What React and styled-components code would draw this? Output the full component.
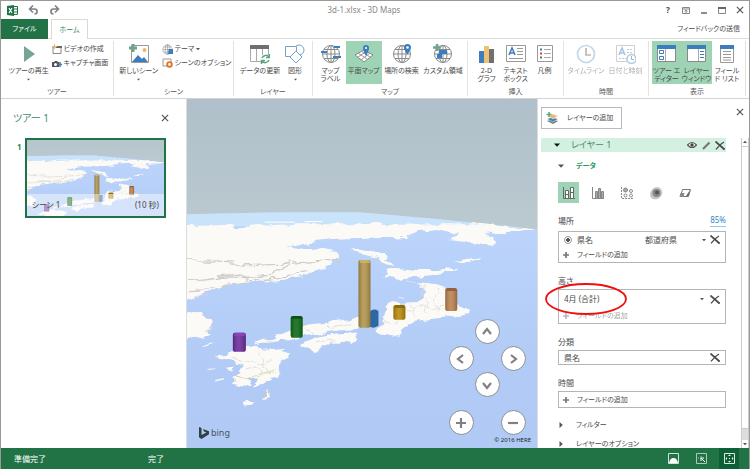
import React, { useState } from 'react';
import styled, { createGlobalStyle } from 'styled-components';

const GlobalStyle = createGlobalStyle`
  * { box-sizing: border-box; }
  body {
    margin: 0;
    color: #484848;
    background: #fff;
    font-family: "Noto Sans", "Noto Sans CJK JP", sans-serif;
    font-size: 8px;
    line-height: 8px;
    font-feature-settings: "palt";
  }
  button, select, input { font: inherit; font-feature-settings: inherit; color: inherit; margin: 0; padding: 0; }
  button, select { border: 0; background: none; }
  a { color: inherit; text-decoration: none; }
  svg { display: block; flex: none; }
`

const Window = styled.div`
  display: flex;
  flex-direction: column;
  height: 100vh;
  border: 1px solid #999;
  border-bottom: 0;
  overflow: hidden;
`

const TitleBar = styled.header`
  display: grid;
  grid-template-columns: 1fr auto 1fr;
  align-items: center;
  height: 18px;
  padding: 0 4px 0 6px;
`

const Quick = styled.div`
  display: flex;
  gap: 10px;
`

const Title = styled.h1`
  margin: 0;
  padding-right: 24px;
  font-size: 8px;
  font-weight: 400;
  color: #888;
`

const Controls = styled.div`
  display: flex;
  justify-content: flex-end;
  gap: 8px;
`

const PlainButton = styled.button`
  display: flex;
  align-items: center;
  justify-content: center;
  min-width: 10px;
  height: 10px;
`

const TabBar = styled.nav`
  display: flex;
  align-items: flex-end;
  height: 20px;
  border-bottom: 1px solid #dcdcdc;
  font-size: 7px;
`

const FileTab = styled.button`
  width: 47px;
  height: 20px;
  margin-bottom: -1px;
  background: #217346;
  color: #fff;
`

const Tab = styled.button`
  width: 37px;
  height: 20px;
  margin: 0 auto -1px 3px;
  border: 1px solid #dcd9d0;
  border-bottom: 0;
  background: #fff;
  color: #2f8a5b;
`

const Feedback = styled.a`
  padding: 0 9px 5px 0;
`

const Ribbon = styled.div`
  display: grid;
  grid-template-columns: 113fr 120fr 79fr 155fr 96fr 85fr 97fr 3fr;
  padding-top: 2px;
  border-bottom: 1px solid #d0d4d6;
  font-size: 7px;
`

const GroupBox = styled.section`
  display: flex;
  flex-direction: column;
  min-width: 0;
  margin-bottom: 2px;
  border-right: 1px solid #e4e3dd;
`

const Tools = styled.div`
  display: flex;
  justify-content: center;
  height: 43px;
`

const GroupName = styled.h2`
  margin: 3px 0 0;
  font-size: 7px;
  font-weight: 400;
  line-height: 9px;
  text-align: center;
  color: #555;
`

const ToolButton = styled.button`
  display: flex;
  flex-direction: column;
  align-items: center;
  gap: 3px;
  width: ${p => p.$w}px;
  padding: 3px 0 1px;
  white-space: nowrap;
  background: ${p => p.$on ? '#9ed4b5' : 'none'};
  opacity: ${p => p.disabled ? 0.45 : 1};
`

const ToolLabel = styled.span`
  display: flex;
  flex-direction: column;
  align-items: center;
  height: 16px;
  gap: 3px;
  white-space: pre-line;
`

const SmallTools = styled.div`
  display: flex;
  flex-direction: column;
  padding-top: 1px;
`

const SmallTool = styled.button`
  display: flex;
  align-items: center;
  gap: 2px;
  height: 14px;
  white-space: nowrap;
`

const Body = styled.main`
  display: flex;
  flex: 1;
  min-height: 0;
`

const TourPane = styled.aside`
  width: 186px;
  padding: 12px 16px 0 12px;
  border-right: 1px solid #ddd;
`

const PaneHead = styled.div`
  display: flex;
  align-items: center;
  justify-content: space-between;
`

const PaneTitle = styled.h2`
  margin: 0;
  font-size: 10px;
  line-height: 14px;
  font-weight: 400;
  color: #48896a;
`

const SceneRow = styled.div`
  display: flex;
  gap: 3px;
  margin: 13px 4px 0;
`

const SceneNumber = styled.span`
  padding-top: 4px;
  font-size: 8px;
  line-height: 10px;
  font-weight: 700;
  color: #2f8a5b;
`

const Thumb = styled.button`
  position: relative;
  flex: 1;
  height: 80px;
  border: 2px solid #217346;
  overflow: hidden;
`

const ThumbCaption = styled.span`
  position: absolute;
  inset: auto 0 0;
  display: flex;
  justify-content: space-between;
  padding: 6px 5px;
  line-height: 10px;
  background: rgba(255, 255, 255, 0.45);
`

const MapArea = styled.section`
  position: relative;
  flex: 1;
  min-width: 0;
  overflow: hidden;
  background: #adc8f2;
`

const MapSvg = styled.svg`
  width: 100%;
  height: 100%;
`

const NavPad = styled.div`
  position: absolute;
  right: 11px;
  bottom: 13px;
  display: grid;
  grid-template-columns: repeat(3, 26px);
  grid-template-rows: 27px 26px 38px 25px;
  grid-template-areas: ". up ." "left . right" ". down ." "plus . minus";
  justify-items: center;
`

const NavButton = styled.button`
  grid-area: ${p => p.$area};
  display: flex;
  align-items: center;
  justify-content: center;
  width: 25px;
  height: 25px;
  border: 1px solid #8b8f94;
  border-radius: 50%;
  background: #fff;
`

const Bing = styled.span`
  position: absolute;
  left: 12px;
  bottom: 9px;
  display: flex;
  align-items: center;
  gap: 2px;
  font-size: 9px;
  line-height: 12px;
  color: #4a5566;
`

const Copyright = styled.span`
  position: absolute;
  right: 6px;
  bottom: 4px;
  font-size: 6px;
  color: #222;
`

const LayerPane = styled.aside`
  display: flex;
  flex-direction: column;
  width: 212px;
  border-left: 1px solid #ddd;
`

const LayerHead = styled.div`
  display: flex;
  justify-content: space-between;
  padding: 8px 4px 9px 3px;
`

const AddLayer = styled.button`
  display: flex;
  align-items: center;
  gap: 8px;
  width: 81px;
  height: 22px;
  padding-left: 4px;
  border: 1px solid #bbb;
  font-size: 7px;
`

const LayerScroll = styled.div`
  display: flex;
  flex: 1;
  min-height: 0;
`

const Layers = styled.div`
  flex: 1;
  min-width: 0;
  overflow: hidden;
  padding: 0 15px 0 3px;
`

const LayerBar = styled.div`
  display: flex;
  align-items: center;
  gap: 4px;
  height: 14px;
  padding: 0 1px 0 13px;
  background: #d3f0e0;
`

const LayerName = styled.h3`
  flex: 1;
  margin: 0 0 0 7px;
  font-size: 9px;
  font-weight: 400;
  color: #48896a;
`

const LayerContent = styled.div`
  padding-left: 17px;
`

const Fold = styled.button`
  display: flex;
  align-items: center;
  gap: 12px;
  height: 14px;
  margin-top: ${p => p.$top}px;
  font-size: 7px;
  font-weight: ${p => p.$open ? 700 : 400};
  color: ${p => p.$open ? '#1f9a5b' : '#484848'};
`

const Visuals = styled.div`
  display: flex;
  gap: 8px;
  margin-top: 9px;
`

const Visual = styled.button`
  display: flex;
  align-items: center;
  justify-content: center;
  width: 21px;
  height: 21px;
  background: ${p => p.$on ? '#9ed4b5' : 'none'};
`

const FieldHead = styled.div`
  display: flex;
  justify-content: space-between;
  line-height: 12px;
  margin: 12px 0 ${p => p.$gap || 2}px;
`

const Percent = styled.a`
  color: #3484c4;
  border-bottom: 1px solid #9cc4e4;
  line-height: 9px;
`

const FieldBox = styled.div`
  position: relative;
  display: flex;
  flex-direction: column;
  border: 1px solid #b5b5b5;
`

const FieldRow = styled.div`
  display: flex;
  align-items: center;
  height: ${p => p.$h}px;
  padding: 0 5px;
`

const RadioLabel = styled.label`
  display: flex;
  align-items: center;
  gap: 5px;
  width: 81px;
`

const Radio = styled.input`
  appearance: none;
  width: 8px;
  height: 8px;
  border: 1px solid #999;
  border-radius: 50%;
  background: radial-gradient(#555 0 2px, #fff 2px);
`

const Select = styled.select`
  flex: 1;
  appearance: none;
  height: 12px;
`

const AddField = styled.button`
  display: flex;
  align-items: center;
  gap: 8px;
  height: ${p => p.$h}px;
  padding: 0 4px;
  font-size: 7px;
  opacity: ${p => p.disabled ? 0.5 : 1};
`

const FieldName = styled.button`
  flex: 1;
  text-align: left;
`

const Gap = styled.span`
  width: ${p => p.$w}px;
`

const Ring = styled.svg`
  position: absolute;
  left: -15px;
  top: -8px;
  pointer-events: none;
`

const ScrollBar = styled.div`
  display: flex;
  flex-direction: column;
  width: 8px;
  border: 1px solid #ccc;
  border-width: 0 1px;
  background: #ddd;
`

const ScrollArrow = styled.button`
  display: flex;
  align-items: center;
  justify-content: center;
  height: 8px;
  background: #fff;
`

const ScrollThumb = styled.div`
  flex: 1;
  margin-bottom: 11px;
  border: 1px solid #ccc;
  border-width: 1px 0;
  background: #fff;
`

const StatusBar = styled.footer`
  display: flex;
  align-items: center;
  height: 21px;
  padding: 0 10px 0 13px;
  background: #217346;
  color: #fff;
`

const StatusText = styled.span`
  width: ${p => p.$w}px;
  margin-right: ${p => p.$last ? 'auto' : 0};
`

const StatusButton = styled.button`
  display: flex;
  align-items: center;
  justify-content: center;
  width: 20px;
  height: 21px;
  margin-left: 8px;
  background: ${p => p.$on ? '#0d5f36' : 'none'};
`

const Caret = ({ size = 4, dir = 'down', color = '#555' }) => {
  const turn = { down: 0, right: -90, up: 180 }[dir]
  return (
    <svg width={size} height={size} viewBox="0 0 4 4">
      <path d="M0 1h4L2 3.2z" fill={color} transform={`rotate(${turn} 2 2)`} />
    </svg>
  )
}

const Cross = ({ size = 9, w = 1.3, color = '#555' }) => (
  <svg width={size} height={size} viewBox="0 0 9 9">
    <path d="M1 1l7 7M8 1L1 8" stroke={color} strokeWidth={w} />
  </svg>
)

const DeleteMark = () => (
  <svg width="10" height="9" viewBox="0 0 10 9">
    <path d="M.5 .5l8.500 7.500" stroke="#4a4a4a" strokeWidth="1.700" fill="none" />
    <path d="M9 1Q5 3 1 8.300M8 8h2" stroke="#4a4a4a" strokeWidth="1.300" fill="none" />
  </svg>
)

const Plus = ({ size = 6, color = '#777' }) => (
  <svg width={size} height={size} viewBox="0 0 6 6">
    <path d="M3 0v6M0 3h6" stroke={color} strokeWidth="1.700" />
  </svg>
)

const Globe = () => (
  <g fill="none" stroke="#8a8a8a" strokeWidth="1">
    <circle cx="10" cy="10" r="8.500" />
    <ellipse cx="10" cy="10" rx="4" ry="8.500" />
    <path d="M10 1.500v17M1.500 10h17M3 5.500h14M3 14.500h14" />
  </g>
)

const Pin = () => (
  <g>
    <path d="M15.500 0a3.500 3.500 0 0 0-3.500 3.500c0 2.500 3.500 7 3.500 7s3.500-4.500 3.500-7a3.500 3.500 0 0 0-3.500-3.500z" fill="#3d7dbd" />
    <circle cx="15.500" cy="3.500" r="1.300" fill="#fff" />
  </g>
)

const icons = {
  play: <path d="M5 2v16l11-8z" fill="#73a695" />,
  scene: <>
    <path d="M2.500 1.500h17v17h-17z" fill="#fff" stroke="#999" />
    <path d="M3 18l6-7 4 4 2-2 4 5z" fill="#3d7dbd" />
    <circle cx="15.500" cy="6" r="2" fill="#ecb869" />
    <path d="M4 0v8M0 4h8" stroke="#6da58b" strokeWidth="3" />
  </>,
  refresh: <>
    <path d="M.5 1.500h18v16H.5z" fill="#fff" stroke="#aaa" />
    <path d="M0 1h19v4H0z" fill="#707070" />
    <path d="M6.500 5v12M12.500 5v12" stroke="#aaa" />
    <circle cx="15.500" cy="15" r="5" fill="#fff" />
    <path d="M12 14a4 4 0 0 1 7-1M19 16a4 4 0 0 1-7 1M19.500 10v3.500H16M11.500 20v-3.500H15" fill="none" stroke="#5da580" strokeWidth="1.500" />
  </>,
  shapes: <g fill="#fff" stroke="#6fa4cf">
    <circle cx="14" cy="6" r="5" /><path d="M.5 2.500h11v10H.5z" /><path d="M11 7l6 6-6 6-6-6z" />
  </g>,
  mapLabel: <><Globe /><path d="M13 3h6M0 8h6M12 13h8" stroke="#3d7dbd" strokeWidth="2" /></>,
  flatMap: <>
    <path d="M1 11l9-5 9 5-9 7z" fill="#fff" stroke="#888" />
    <path d="M4 13l9-6M7 16l9-7M4 9l9 6M7 7l9 6" stroke="#999" fill="none" />
    <path d="M12 1a3 3 0 0 0-3 3c0 3 3 8 3 8s3-5 3-8a3 3 0 0 0-3-3z" fill="#3d7dbd" /><circle cx="12" cy="4" r="1.100" fill="#fff" />
  </>,
  find: <><Globe /><Pin /></>,
  region: <>
    <Globe />
    <path d="M6 6h8v4H9v4H4v-4h2z" fill="#3d7dbd" />
    <path d="M4 0v7M0 3.500h7.500" stroke="#6da58b" strokeWidth="2.500" />
  </>,
  chart: <><path d="M2 7h5v12H2z" fill="#3d7dbd" /><path d="M7 2h5v17H7z" fill="#ecc174" /><path d="M12 5h5v14h-5z" fill="#707070" /></>,
  textBox: <>
    <path d="M.5 1.500h19v16H.5z" fill="#fff" stroke="#999" />
    <path d="M3 11L6 4l3 7M4 9h4" stroke="#3d7dbd" strokeWidth="1.500" fill="none" />
    <path d="M11 4.500h6M11 7.500h6M11 10.500h6M3 14.500h14" stroke="#999" />
  </>,
  legend: <>
    <path d="M2.500 1.500h15v16h-15z" fill="#fff" stroke="#999" />
    <path d="M9 5.500h7M9 9.500h7M9 13.500h7" stroke="#aaa" />
    <path d="M5 5.500h2" stroke="#3d7dbd" strokeWidth="2" /><path d="M5 9.500h2" stroke="#d24726" strokeWidth="2" /><path d="M5 13.500h2" stroke="#666" strokeWidth="2" />
  </>,
  clock: <><circle cx="10" cy="10" r="8.500" fill="#fff" stroke="#76a6d4" strokeWidth="1.700" /><path d="M10 4v7h5" fill="none" stroke="#666" strokeWidth="1.700" /></>,
  date: <>
    <path d="M.5 1.500h18v16H.5z" fill="#fff" stroke="#999" />
    <path d="M3 11L6 4l3 7M4 9h4" stroke="#3d7dbd" strokeWidth="1.500" fill="none" />
    <path d="M11 5.500h6M11 8.500h6M3 14.500h8" stroke="#888" strokeDasharray="2 1" />
    <circle cx="15.500" cy="15" r="4.500" fill="#fff" stroke="#4b8dcb" strokeWidth="1.400" /><path d="M15.500 12v3.500H18" fill="none" stroke="#555" />
  </>,
  tourPane: <>
    <path d="M.5 1.500h18v16H.5z" fill="#fff" stroke="#888" /><path d="M0 1h19v4H0z" fill="#3d7dbd" />
    <path d="M2.500 6.500h4v3h-4zM2.500 12.500h4v3h-4z" fill="none" stroke="#3d7dbd" /><path d="M8.500 5v12" stroke="#aaa" />
  </>,
  layerPane: <>
    <path d="M.5 1.500h18v16H.5z" fill="#fff" stroke="#888" /><path d="M0 1h19v4H0z" fill="#3d7dbd" />
    <path d="M11.500 5v12" stroke="#aaa" /><path d="M13 7.500h4M13 10.500h4M13 13.500h4" stroke="#3d7dbd" />
  </>,
  fieldList: <>
    <path d="M3.500 1.500h13v17h-13z" fill="#fff" stroke="#999" /><path d="M3 1h14v4H3z" fill="#3d7dbd" />
    <path d="M6 7.500h8M6 10.500h8M6 13.500h8M6 16h8" stroke="#999" />
  </>,
}

const Arrow2 = ({ flip }) => (
  <svg width="11" height="10" viewBox="0 0 11 10">
    <path d="M5 .5L1.500 4 5 7.500M2 4h4.500c3.500 0 3.500 5 0 5" fill="none" stroke="#808080" strokeWidth="1.600" transform={flip ? 'translate(11 0) scale(-1 1)' : undefined} />
  </svg>
)

const Tool = ({ icon, label, arrow, w, on, disabled }) => (
  <ToolButton $w={w} $on={on} disabled={disabled}>
    <svg width="20" height="20" viewBox="0 0 20 20">{icons[icon]}</svg>
    <ToolLabel>
      {label}
      {arrow && <Caret size={3} />}
    </ToolLabel>
  </ToolButton>
)

const Group = ({ name, children }) => (
  <GroupBox>
    <Tools>{children}</Tools>
    <GroupName>{name}</GroupName>
  </GroupBox>
)

// x, top, width, height, front colour, top colour
const columns = [
  [359, 259, 12, 68, '#b2964d', '#cbb063'],
  [394, 304, 12, 15, '#b98a0a', '#8f6c08'],
  [446, 287, 12, 23, '#bd8350', '#8f6240'],
  [291, 315, 12, 22, '#0d6b17', '#0a5411'],
  [233, 332, 13, 19, '#6d2c9e', '#8b45ba'],
]

const landPath = [
  'M180 225l40-1 20 2 50-3 70 0 80-1 35 0 35 4 28 2-18 3-22 0-12 2 12 7-3 5-11-2-18-3-18-2 12-4-12-2-10-3-18 2-12 5-48 2-30 1-25 4-20 4 25 1 12-1 15 2 3 8-10 7-16 6-11 6-20 3-38 3-20 2-15 7-20 6-22 3z',
  'M350 247l12 1 19 4 8 4-3 2 8 3 2 4-10-2-7-5-16-4z',
  'M388 270l10-3 20 2 20 0 14-2 8 0-10 4-12 2-18 3-10 0-8 4-10-4-8-1 5-2z',
  'M405 280l10 1 12 1 10 1 9 3 3 9 6 8 5 3 11 4-1 3-7 1-6 4-7-1-23 3-12 1-8 5-5 7-2 3-15-3-9-4 7-7 5-19 10-2 22-1 7-7-2-6-9-5z',
  'M253 341l9-3 13-1 17-7 13-6 20-2 20-3 13-1 6 3 7 5-12 2-24 2-17 3-23 4-20 4-17 3z',
  'M300 345l10-7 22-5 15-1 11 0-2 4 2 2-6 4-10-1-10 0-8 5-6 6-5-1-6-3z',
  'M215 357l10-2 8-4 12-4 12-2 8 4 20-2-4 4 10 3-9 7-1 8-3 8-12 2-4 5-9 3 5-9-10-1 4 7-8 2-10-2 2-4-3-5 6-5 5-6-8-1-3-2-8-1z',
  'M180 307l13 4 9 1 6 5 5 3-1 6-5 6 5 2-7 4-10-2-15 2z',
  'M243 401l6-1 6 1-3 3-8 1zM269 390l1 4-4 5-4 0 3-3zM202 346l7-5 4 0-8 5zM207 368l6 0 3-2zM226 366l8-1-3 5zM215 380l9-2-8 5zM455 262l12-3 17-2-14 5zM399 296l5 1-4 1z',
]

const Scene = ({ id, viewBox }) => (
  <MapSvg viewBox={viewBox} preserveAspectRatio="xMidYMid slice" aria-hidden="true">
    <defs>
      <linearGradient id={`${id}-sky`} x1="0" y1="0" x2="0" y2="1">
        <stop offset="0" stopColor="#afc0ca" /><stop offset="1" stopColor="#bccad0" />
      </linearGradient>
      <linearGradient id={`${id}-sea`} x1="0" y1="0" x2="0" y2="1">
        <stop offset="0" stopColor="#bdd5fc" /><stop offset=".35" stopColor="#b1cbf6" /><stop offset="1" stopColor="#adc8f0" />
      </linearGradient>
      <linearGradient id={`${id}-side`}>
        <stop offset="0" stopColor="#000" stopOpacity=".22" /><stop offset=".45" stopColor="#fff" stopOpacity=".1" /><stop offset="1" stopColor="#000" stopOpacity=".22" />
      </linearGradient>
      {/* breaks up the coastlines */}
      <filter id={`${id}-coast`} filterUnits="userSpaceOnUse" x="160" y="200" width="400" height="260">
        <feTurbulence type="fractalNoise" baseFrequency=".07 .14" numOctaves="3" seed="4" />
        <feDisplacementMap in="SourceGraphic" scale="8" xChannelSelector="R" yChannelSelector="G" />
      </filter>
    </defs>
    <path d="M-200 97h1200v140h-1200z" fill={`url(#${id}-sky)`} />
    <path d="M-200 213h387l100-2h73l80 7 97 10 463 40v400h-1200z" fill={`url(#${id}-sea)`} />
    <path d="M-200 213h387l100-2h73l80 7 97 10-100-3h-637z" fill="#c9e3fb" />
    <g filter={`url(#${id}-coast)`}>
      <g fill="#fbfaf6">
        {landPath.map(d => <path key={d} d={d} />)}
      </g>
      <g fill="none" stroke="#cfcdca" strokeLinejoin="round">
        <path d="M180 255l15 3 5 3 20 0 15 1 6 3 20-1 21-1 8-2M290 262l-5 6-12 5-20 2-25 1-40 5M180 291l25-1 17-5 20-2 6-3 0-4-8-3-20 2M293 262l30-2 20 2M248 280l30-3 30-8" strokeWidth="1.300" />
        <path d="M232 357l12 5 8-2 10 4 10-4M258 350l7 8-3 8 8 6M245 368l12-2 6 8M305 328l8 4M325 324l6 4 12-3 10-2M315 342l10-2 12-1M262 342l14-2M395 312l10-6 8 4 12-6 8 5 14-6M425 284l-2 10 6 8-3 10M440 287l-6 12 6 10M376 328l10-8 8 2 10-4M395 308l8 12M412 303l4 14" strokeWidth=".8" stroke="#dcd9da" />
      </g>
      <path d="M240 377l15-1 22-7" stroke="#d7dfb0" fill="none" />
      <path d="M235 374l5 3M268 391l-3 5" stroke="#ecc48e" fill="none" />
      <path d="M187 299l20-5M202 312l10 6 0 7-6 7" stroke="#e4c8e6" fill="none" />
    </g>
    <path d="M265 221h30M305 220.500h18" stroke="#fff" />
    <path d="M370 311q4-4 9-1v15q-4 3-9 1z" fill="#2d68a5" />
    {columns.map(([x, y, w, h, front, top]) => (
      <g key={x}>
        <rect x={x} y={y} width={w} height={h} rx="2" fill={front} />
        <rect x={x} y={y} width={w} height={h} rx="2" fill={`url(#${id}-side)`} />
        <path d={`M${x + 1} ${y + 3}l1-3h${w - 4}l2 3z`} fill={top} />
      </g>
    ))}
  </MapSvg>
)

const navs = [
  ['up', '上', 'M2 8l4-5 4 5'],
  ['left', '左', 'M8 2L3 6l5 4'],
  ['right', '右', 'M4 2l5 4-5 4'],
  ['down', '下', 'M2 4l4 5 4-5'],
  ['plus', '拡大', 'M6 1v10M1 6h10'],
  ['minus', '縮小', 'M1 6h10'],
]

const visualIcons = [
  <g fill="#fff" stroke="#666"><path d="M1.500 1v11.500H13" fill="none" /><path d="M3.500 4.500h3v8h-3zM8.500 1.500h3v11h-3z" /><path d="M3.500 8.500h3M8.500 6.500h3" /></g>,
  <g fill="#aaa" stroke="#888"><path d="M1.500 1v11.500H13" fill="none" /><path d="M4.500 5.500h2v7h-2zM7.500 2.500h2v10h-2zM10.500 5.500h2v7h-2z" /></g>,
  <g fill="#fff" stroke="#888"><path d="M1.500 1v11.500H13" fill="none" strokeDasharray="2 1" /><circle cx="5.500" cy="4" r="2" fill="#aaa" /><circle cx="11" cy="5" r="1.500" /><circle cx="5.500" cy="9.500" r="1.500" /><circle cx="11" cy="9.500" r="1.500" /></g>,
  <g><path d="M5 2c5-3 9 2 8 6s-5 6-9 5-4-8 1-11z" fill="#c4c4c4" /><circle cx="7.500" cy="7" r="4" fill="#888" /><circle cx="8" cy="6.500" r="2" fill="#555" /></g>,
  <g fill="#fff" stroke="#777"><path d="M4.500 3.500h8l-2 7h-8z" /><path d="M2.500 7h4l-1 4h-4z" fill="#888" stroke="none" /><path d="M8 10l4-6-1.500 6z" fill="#666" stroke="none" /></g>,
]

const App = () => {
  const [visual, setVisual] = useState(0);
  const [place, setPlace] = useState('都道府県');

  return (
    <>
      <GlobalStyle />
      <Window lang="ja">
        <TitleBar>
          <Quick>
            <svg width="11" height="11" viewBox="0 0 11 11" aria-label="Excel">
              <path d="M6 1.500h4.500v8H6" fill="#fff" stroke="#217346" /><path d="M7 4h3M7 7h3" stroke="#217346" />
              <path d="M0 1l7-1v11l-7-1z" fill="#217346" /><path d="M2 3l3 5M5 3L2 8" stroke="#fff" strokeWidth="1.200" />
            </svg>
            <PlainButton aria-label="元に戻す"><Arrow2 /></PlainButton>
            <PlainButton aria-label="やり直し"><Arrow2 flip /></PlainButton>
          </Quick>
          <Title>3d-1.xlsx - 3D Maps</Title>
          <Controls>
            <PlainButton><b>?</b></PlainButton>
            <PlainButton aria-label="リボンの表示"><svg width="8" height="7" viewBox="0 0 8 7"><path d="M.5 .5h7v6h-7zM1 2h6M4 6V3M2.500 4.500L4 3l1.500 1.500" fill="none" stroke="#888" /></svg></PlainButton>
            <PlainButton aria-label="最小化"><svg width="8" height="8" viewBox="0 0 8 8"><path d="M1 7h6" stroke="#666" strokeWidth="1.500" /></svg></PlainButton>
            <PlainButton aria-label="最大化"><svg width="8" height="7" viewBox="0 0 8 7"><path d="M.5 1v5.500h7V1" fill="none" stroke="#888" /><path d="M0 1h8" stroke="#666" strokeWidth="2" /></svg></PlainButton>
            <PlainButton aria-label="閉じる"><Cross size={8} /></PlainButton>
          </Controls>
        </TitleBar>
        <TabBar>
          <FileTab>ファイル</FileTab>
          <Tab>ホーム</Tab>
          <Feedback href="#feedback">フィードバックの送信</Feedback>
        </TabBar>

        <Ribbon>
          <Group name="ツアー">
            <Tool icon="play" label="ツアーの再生" arrow w={46} />
            <SmallTools>
              <SmallTool>
                <svg width="10" height="10" viewBox="0 0 10 10"><path d="M1 3h8v6.500H1z" fill="#fff" stroke="#888" /><path d="M4 2h6v2H4z" fill="#666" /><path d="M2.500 0v5M0 2.500h5" stroke="#ecb869" /></svg>
                ビデオの作成
              </SmallTool>
              <SmallTool>
                <svg width="10" height="10" viewBox="0 0 10 10"><path d="M0 4h2l1-1h2l1 1h1v5H0z" fill="#555" /><circle cx="3.500" cy="6.500" r="1.500" fill="#fff" /><path d="M8 4v5M5.500 6.500h5" stroke="#3d7dbd" strokeWidth="1.500" /></svg>
                キャプチャ画面
              </SmallTool>
            </SmallTools>
          </Group>
          <Group name="シーン">
            <Tool icon="scene" label="新しいシーン" arrow w={46} />
            <SmallTools>
              <SmallTool>
                <svg width="11" height="11" viewBox="0 0 20 20"><Globe /><path d="M12 9h8v9h-9z" fill="#3d7dbd" /></svg>
                テーマ <Caret />
              </SmallTool>
              <SmallTool>
                <svg width="11" height="10" viewBox="0 0 11 10"><path d="M1 1h8v7H1z" fill="#fff" stroke="#999" /><circle cx="7.500" cy="6.500" r="2.300" fill="#fff" stroke="#e07020" strokeWidth="1.800" /></svg>
                シーンのオプション
              </SmallTool>
            </SmallTools>
          </Group>
          <Group name="レイヤー">
            <Tool icon="refresh" label="データの更新" w={44} />
            <Tool icon="shapes" label="図形" arrow w={26} />
          </Group>
          <Group name="マップ">
            <Tool icon="mapLabel" label={'マップ\nラベル'} w={30} />
            <Tool icon="flatMap" label="平面マップ" w={36} on />
            <Tool icon="find" label="場所の検索" w={40} />
            <Tool icon="region" label="カスタム領域" w={43} />
          </Group>
          <Group name="挿入">
            <Tool icon="chart" label={'2-D\nグラフ'} w={28} />
            <Tool icon="textBox" label={'テキスト\nボックス'} w={30} />
            <Tool icon="legend" label="凡例" w={28} />
          </Group>
          <Group name="時間">
            <Tool icon="clock" label="タイムライン" w={39} disabled />
            <Tool icon="date" label="日付と時刻" w={40} disabled />
          </Group>
          <Group name="表示">
            <Tool icon="tourPane" label={'ツアー エ\nディター'} w={29} on />
            <Tool icon="layerPane" label={'レイヤー\nウィンドウ'} w={31} on />
            <Tool icon="fieldList" label={'フィール\nド リスト'} w={30} />
          </Group>
        </Ribbon>

        <Body>
          <TourPane>
            <PaneHead>
              <PaneTitle>ツアー 1</PaneTitle>
              <PlainButton aria-label="ツアー エディターを閉じる"><Cross size={8} /></PlainButton>
            </PaneHead>
            <SceneRow>
              <SceneNumber>1</SceneNumber>
              <Thumb>
                <Scene id="thumb" viewBox="187 172 350 190" />
                <ThumbCaption><span>シーン 1</span><span>(10 秒)</span></ThumbCaption>
              </Thumb>
            </SceneRow>
          </TourPane>

          <MapArea>
            <Scene id="map" viewBox="187 97 351 351" />
            <Bing>
              <svg width="10" height="12" viewBox="0 0 10 12"><path d="M0 0l2.500 1v7l5-2.500-2.500-1-1-2.500 6 2.200v3L2.500 12 0 10.200z" fill="#333d4a" /></svg>
              bing
            </Bing>
            <NavPad>
              {navs.map(([area, label, d]) => (
                <NavButton key={area} $area={area} aria-label={label}>
                  <svg width="12" height="12" viewBox="0 0 12 12"><path d={d} fill="none" stroke="#808080" strokeWidth="2.200" /></svg>
                </NavButton>
              ))}
            </NavPad>
            <Copyright>© 2016 HERE</Copyright>
          </MapArea>

          <LayerPane>
            <LayerHead>
              <AddLayer>
                <svg width="13" height="13" viewBox="0 0 13 13">
                  <path d="M1 9l5-2 6 2-5 3z" fill="#777" /><path d="M1 7l5-2 6 2-5 3z" fill="#3d7dbd" stroke="#fff" strokeWidth=".5" /><path d="M2 4l5-2 5 2-5 3z" fill="#ecb869" stroke="#fff" strokeWidth=".5" />
                  <path d="M3 0v5M.5 2.500h5" stroke="#5da580" strokeWidth="1.500" />
                </svg>
                レイヤーの追加
              </AddLayer>
              <PlainButton aria-label="レイヤー ウィンドウを閉じる"><Cross size={8} /></PlainButton>
            </LayerHead>
            <LayerScroll>
              <Layers>
                <LayerBar>
                  <Caret size={6} color="#111" />
                  <LayerName>レイヤー 1</LayerName>
                  <PlainButton aria-label="表示"><svg width="10" height="8" viewBox="0 0 10 8"><path d="M.5 4Q5-1 9.500 4 5 9 .5 4z" fill="#fff" stroke="#555" strokeWidth="1.200" /><circle cx="5" cy="4" r="1.700" fill="#444" /></svg></PlainButton>
                  <PlainButton aria-label="名前の変更"><svg width="9" height="9" viewBox="0 0 9 9"><path d="M1 8L7.500 1.500" stroke="#777" strokeWidth="2.200" /></svg></PlainButton>
                  <PlainButton aria-label="レイヤーの削除"><DeleteMark /></PlainButton>
                </LayerBar>
                <LayerContent>
                  <Fold $top={7} $open><Caret size={6} />データ</Fold>
                  <Visuals>
                    {visualIcons.map((icon, i) => (
                      <Visual key={i} $on={visual === i} onClick={() => setVisual(i)} aria-label={`グラフ ${i + 1}`}>
                        <svg width="14" height="14" viewBox="0 0 14 14">{icon}</svg>
                      </Visual>
                    ))}
                  </Visuals>

                  <FieldHead $gap={4}><span>場所</span><Percent href="#confidence">85%</Percent></FieldHead>
                  <FieldBox>
                    <FieldRow $h={15}>
                      <RadioLabel><Radio type="radio" name="place" defaultChecked />県名</RadioLabel>
                      <Select aria-label="場所の種類" value={place} onChange={e => setPlace(e.target.value)}>
                        <option>都道府県</option>
                      </Select>
                      <Caret />
                      <Gap $w={4} />
                      <PlainButton aria-label="県名の削除"><DeleteMark /></PlainButton>
                    </FieldRow>
                    <AddField $h={15}><Plus />フィールドの追加</AddField>
                  </FieldBox>

                  <FieldHead><span>高さ</span></FieldHead>
                  <FieldBox>
                    <FieldRow $h={18}>
                      <Select aria-label="高さ"><option>4月 (合計)</option></Select>
                      <Caret />
                      <Gap $w={6} />
                      <PlainButton aria-label="4月の削除"><DeleteMark /></PlainButton>
                    </FieldRow>
                    <AddField $h={15} disabled><Plus />フィールドの追加</AddField>
                    <Ring width="84" height="34" viewBox="0 0 84 34"><ellipse cx="42" cy="17" rx="40" ry="15" fill="none" stroke="#ee1010" strokeWidth="1.800" /></Ring>
                  </FieldBox>

                  <FieldHead><span>分類</span></FieldHead>
                  <FieldBox>
                    <FieldRow $h={13}>
                      <FieldName>県名</FieldName>
                      <PlainButton aria-label="分類の削除"><DeleteMark /></PlainButton>
                    </FieldRow>
                  </FieldBox>

                  <FieldHead><span>時間</span></FieldHead>
                  <FieldBox>
                    <AddField $h={15}><Plus />フィールドの追加</AddField>
                  </FieldBox>

                  <Fold $top={10}><Caret size={6} dir="right" />フィルター</Fold>
                  <Fold $top={5}><Caret size={6} dir="right" />レイヤーのオプション</Fold>
                </LayerContent>
              </Layers>
              <ScrollBar>
                <ScrollArrow aria-label="上へスクロール"><Caret dir="up" /></ScrollArrow>
                <ScrollThumb />
                <ScrollArrow aria-label="下へスクロール"><Caret /></ScrollArrow>
              </ScrollBar>
            </LayerScroll>
          </LayerPane>
        </Body>

        <StatusBar>
          <StatusText $w={134}>準備完了</StatusText>
          <StatusText $w={40} $last>完了</StatusText>
          <StatusButton aria-label="地表"><svg width="11" height="11" viewBox="0 0 11 11"><path d="M.5 .5h10v10H.5z" fill="none" stroke="#cfe3d7" /><path d="M1 10q1-5 4.500-5T10 10z" fill="#fff" /></svg></StatusButton>
          <StatusButton aria-label="選択"><svg width="11" height="11" viewBox="0 0 11 11"><path d="M.5 .5h10v10H.5z" fill="none" stroke="#a9cbb8" /><path d="M2 5h3V2" stroke="#a9cbb8" fill="none" strokeDasharray="1 1" /><path d="M5 5l4 4M5 5h3M5 5v3" stroke="#fff" fill="none" /></svg></StatusButton>
          <StatusButton $on aria-label="全体表示"><svg width="11" height="11" viewBox="0 0 11 11"><path d="M.5 .5h10v10H.5z" fill="none" stroke="#dcebe2" /><path d="M4 3l1.500-1.500L7 3zM4 8l1.500 1.500L7 8zM3 4L1.500 5.500 3 7zM8 4l1.500 1.500L8 7zM5 5h1v1H5z" fill="#fff" /></svg></StatusButton>
        </StatusBar>
      </Window>
    </>
  )
}

export default App;
